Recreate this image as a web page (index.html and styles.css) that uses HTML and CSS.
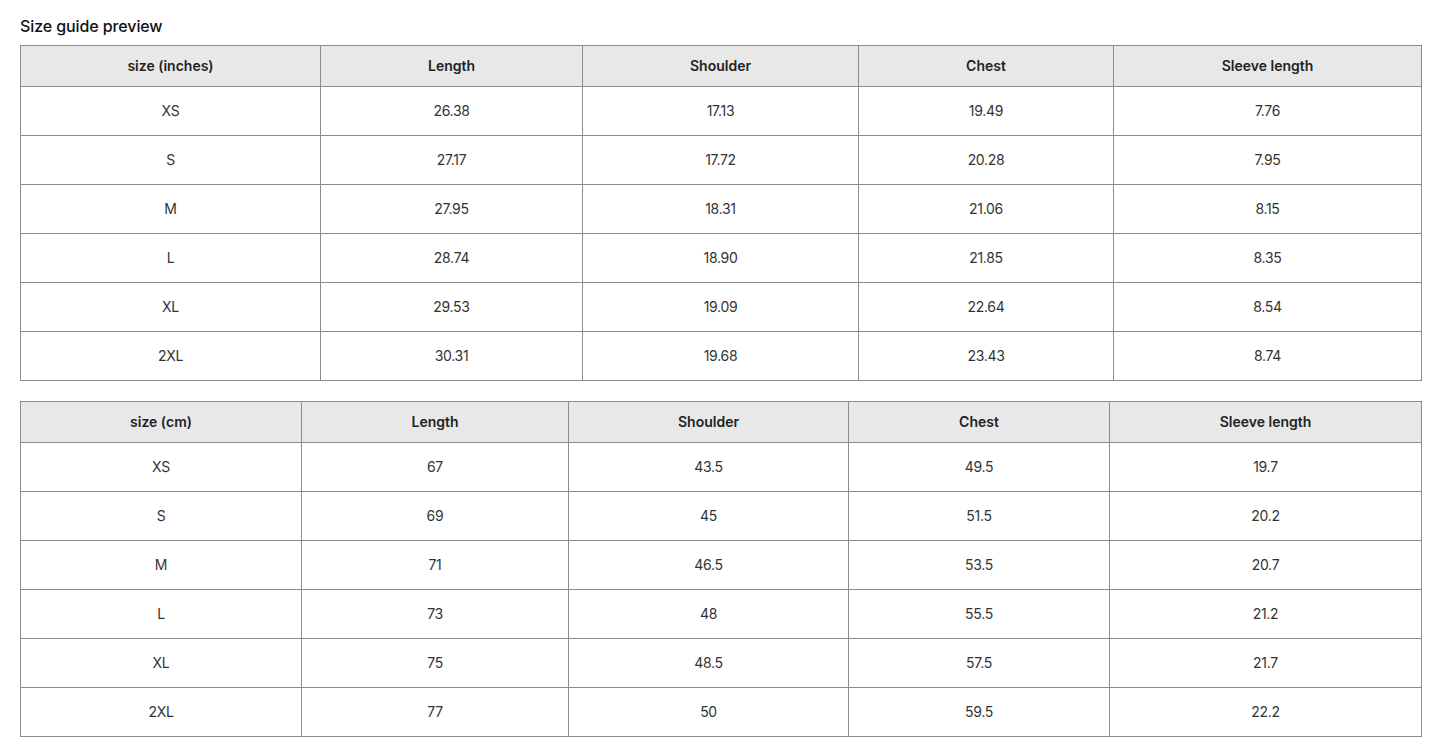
FILE: index.html
```html
<!DOCTYPE html>
<html>
<head>
<meta charset="utf-8">
<link rel="stylesheet" href="styles.css">
</head>
<body>
<div class="page">
  <h2 class="title">Size guide preview</h2>
  <table class="size-table t-in">
    <colgroup><col class="c1"><col class="c2"><col class="c3"><col class="c4"><col class="c5"></colgroup>
    <thead><tr><th>size (inches)</th><th>Length</th><th>Shoulder</th><th>Chest</th><th>Sleeve length</th></tr></thead>
    <tbody>
      <tr><td>XS</td><td>26.38</td><td>17.13</td><td>19.49</td><td>7.76</td></tr>
      <tr><td>S</td><td>27.17</td><td>17.72</td><td>20.28</td><td>7.95</td></tr>
      <tr><td>M</td><td>27.95</td><td>18.31</td><td>21.06</td><td>8.15</td></tr>
      <tr><td>L</td><td>28.74</td><td>18.90</td><td>21.85</td><td>8.35</td></tr>
      <tr><td>XL</td><td>29.53</td><td>19.09</td><td>22.64</td><td>8.54</td></tr>
      <tr><td>2XL</td><td>30.31</td><td>19.68</td><td>23.43</td><td>8.74</td></tr>
    </tbody>
  </table>
  <table class="size-table t-cm">
    <colgroup><col class="c1"><col class="c2"><col class="c3"><col class="c4"><col class="c5"></colgroup>
    <thead><tr><th>size (cm)</th><th>Length</th><th>Shoulder</th><th>Chest</th><th>Sleeve length</th></tr></thead>
    <tbody>
      <tr><td>XS</td><td>67</td><td>43.5</td><td>49.5</td><td>19.7</td></tr>
      <tr><td>S</td><td>69</td><td>45</td><td>51.5</td><td>20.2</td></tr>
      <tr><td>M</td><td>71</td><td>46.5</td><td>53.5</td><td>20.7</td></tr>
      <tr><td>L</td><td>73</td><td>48</td><td>55.5</td><td>21.2</td></tr>
      <tr><td>XL</td><td>75</td><td>48.5</td><td>57.5</td><td>21.7</td></tr>
      <tr><td>2XL</td><td>77</td><td>50</td><td>59.5</td><td>22.2</td></tr>
    </tbody>
  </table>
</div>
</body>
</html>
```

FILE: styles.css
```css
html, body {
  margin: 0;
  padding: 0;
  background: #ffffff;
}
body {
  font-family: Inter, "Liberation Sans", Arial, sans-serif;
  color: #222;
}
.page {
  padding: 14px 12px 0 20px;
}
.title {
  margin: 0 0 7px 0;
  font-size: 16px;
  line-height: 24px;
  font-weight: 500;
  color: #111;
  letter-spacing: -0.1px;
}
.size-table {
  width: 1402px;
  border-collapse: collapse;
  table-layout: fixed;
  margin-bottom: 20px;
}
.size-table th,
.size-table td {
  border: 1px solid #8c8c8c;
  text-align: center;
  font-size: 14px;
  padding: 0 0 2px 0;
}
.size-table th {
  height: 38px;
  background: #e8e8e8;
  font-weight: 600;
  color: #222;
}
.size-table td {
  height: 46px;
  font-weight: 400;
  color: #333;
  letter-spacing: -0.3px;
}
.t-in .c1 { width: 300px; }
.t-in .c2 { width: 262px; }
.t-in .c3 { width: 276px; }
.t-in .c4 { width: 255px; }
.t-in .c5 { width: 308px; }
.t-cm .c1 { width: 281px; }
.t-cm .c2 { width: 267px; }
.t-cm .c3 { width: 280px; }
.t-cm .c4 { width: 261px; }
.t-cm .c5 { width: 312px; }
```
